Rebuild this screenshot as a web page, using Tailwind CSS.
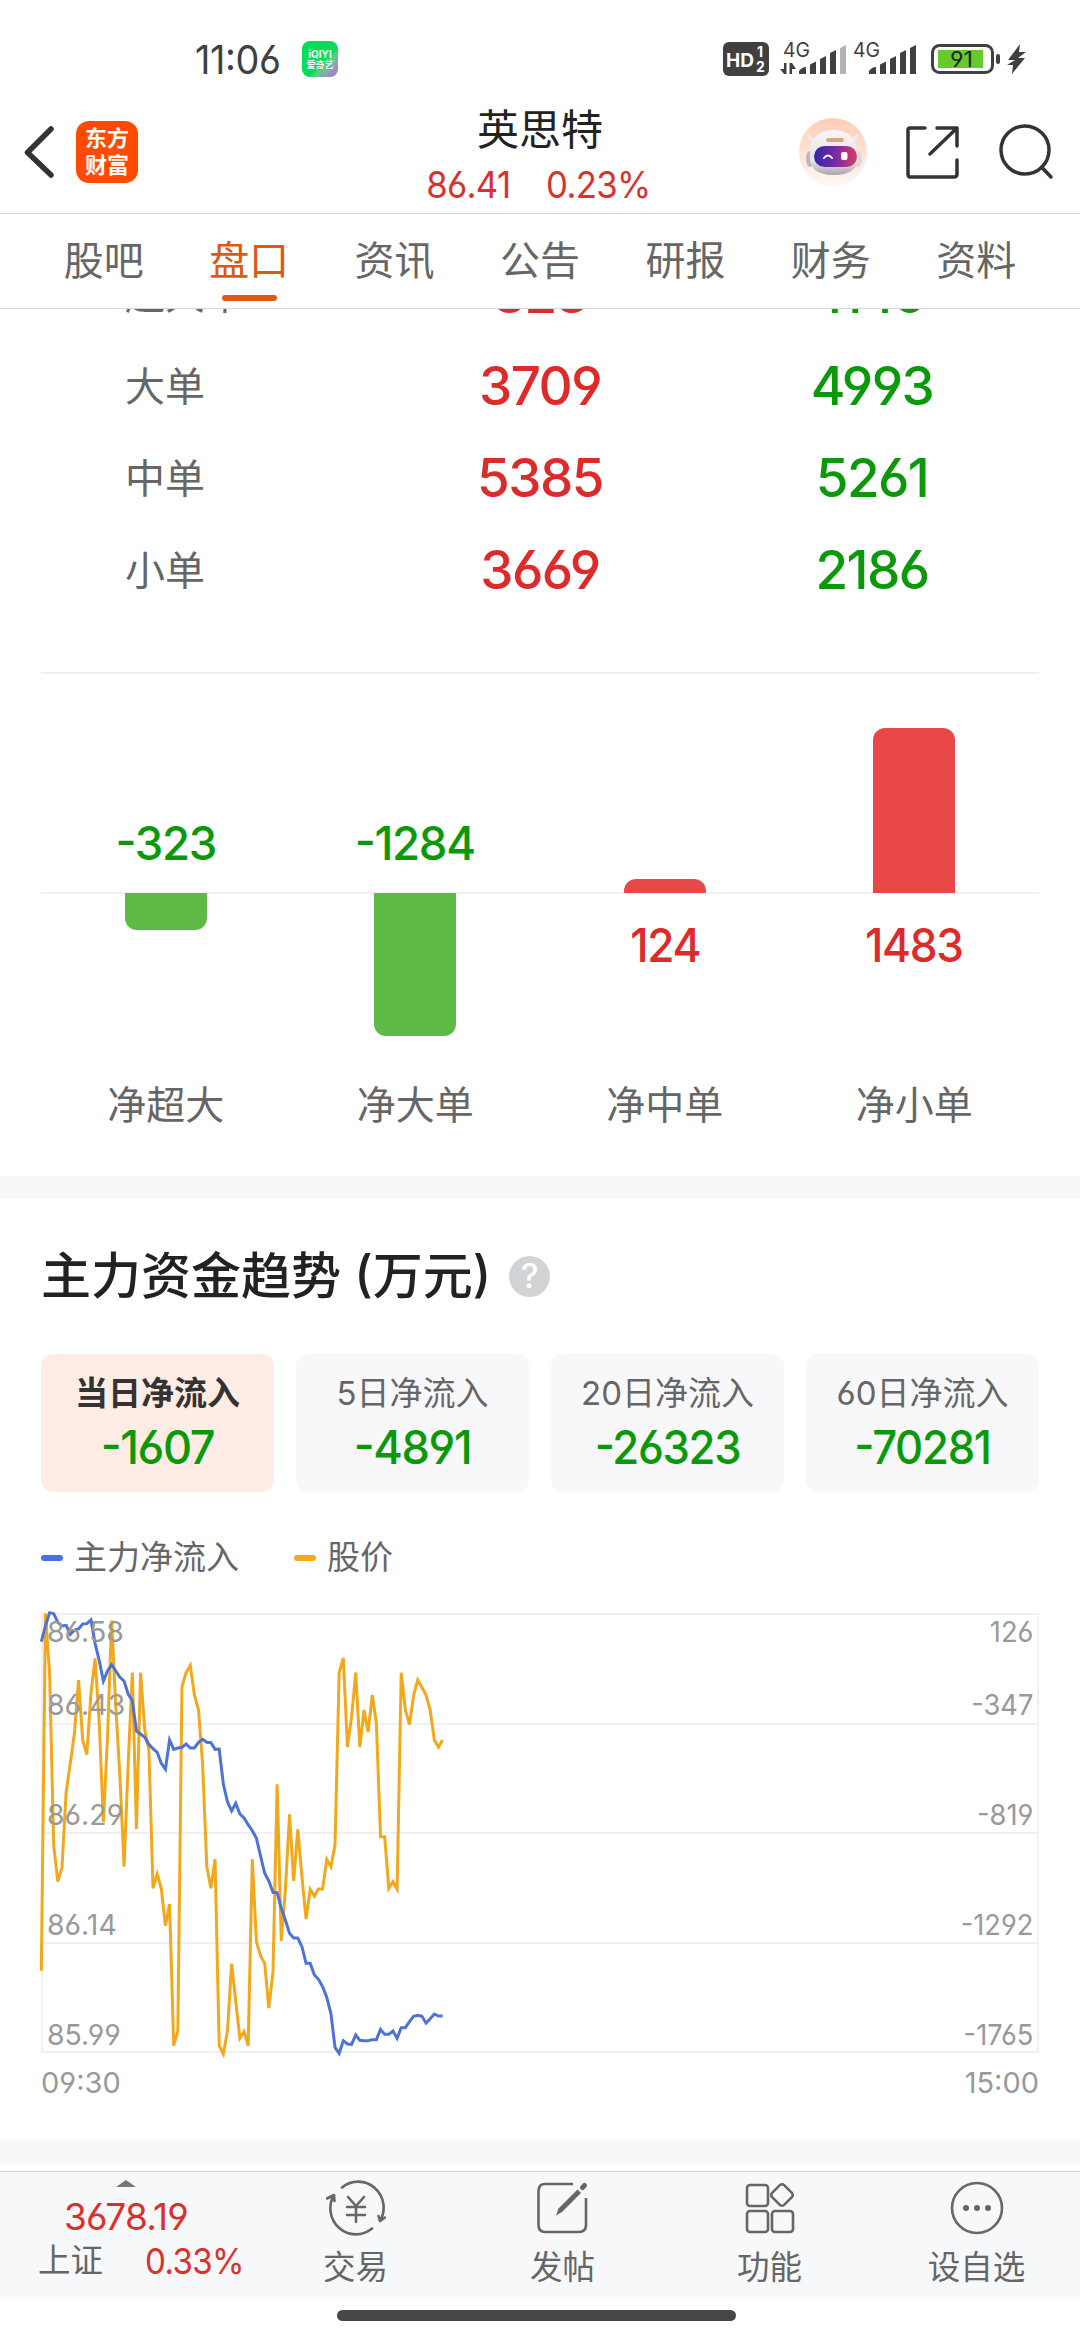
<!DOCTYPE html>
<html lang="zh-CN">

<head>
	<meta charset="UTF-8">
	<meta name="viewport" content="width=device-width, initial-scale=1.0">
	<title>英思特 - 盘口</title>
	<script src="https://cdn.jsdelivr.net/npm/@tailwindcss/browser@4"></script>
</head>

<body class="bg-white font-[Inter,'Noto_Sans_CJK_SC',sans-serif] [font-feature-settings:'cv03','cv04','case']">
	<div class="flex flex-col w-[1080px] h-[2340px] overflow-hidden text-[#666]">

		<!-- status bar -->
		<div class="flex items-center h-[100px] shrink-0 pt-[18px] pl-[195px] text-[#404040]">
			<span class="w-[107px] text-[39px] leading-none tracking-[-0.01em]"><span class="inline-block origin-left scale-x-97">11:06</span></span>
			<div class="flex flex-col items-center justify-center w-9 h-9 rounded-lg bg-linear-to-br from-[#08dc5c] from-60% to-[#b44cf0] text-white font-bold">
				<span class="text-[10px] leading-[10px]">iQIYI</span>
				<span class="text-[9px] leading-[11px]">爱奇艺</span>
			</div>
			<svg class="ml-[384px]" width="306" height="36" viewBox="722 41 306 36">
				<rect x="723" y="42" width="46" height="34" rx="6" fill="#404040" />
				<g fill="#fff" font-family="Inter" font-weight="700">
					<text x="726" y="66.500" font-size="19" textLength="28" lengthAdjust="spacingAndGlyphs">HD</text>
					<text x="757" y="57" font-size="14">1</text>
					<text x="756" y="72" font-size="14">2</text>
				</g>
				<g fill="#404040" font-family="Inter">
					<text x="783" y="57" font-size="20" textLength="27" lengthAdjust="spacingAndGlyphs">4G</text>
					<text x="853" y="57" font-size="20" textLength="27" lengthAdjust="spacingAndGlyphs">4G</text>
				</g>
				<g fill="#404040">
					<path d="M784 63v11h2.500V63zM780 69l4 5V69zM789.500 63v11h2.500V63zM792 63l4 6h-4z" />
					<path d="M799 74v-3q3-4 7-4v7zM810 74V64.500l6-3V74zM820 74V59l6-3V74zM830 74V53l6-3V74z" />
					<path d="M840 74V48l6-3V74z" fill="#b5b5b5" />
					<path d="M869 74v-3q3-4 7-4v7zM880 74V64.500l6-3V74zM890 74V59l6-3V74zM900 74V53l6-3V74zM910 74V48l6-3V74z" />
					<rect x="996" y="54" width="4" height="10" rx="2" />
					<path d="M1020 44l-12 16h7l-8 5h6l-1 9 13-16h-7l8-6h-7z" />
				</g>
				<rect x="932.500" y="45.500" width="60" height="27" rx="7" fill="none" stroke="#404040" stroke-width="3" />
				<rect x="938" y="50" width="45" height="18" fill="#66c92c" />
				<text x="950" y="67" font-size="21" font-family="Inter" fill="#222" textLength="23" lengthAdjust="spacingAndGlyphs">91</text>
			</svg>
		</div>

		<!-- header -->
		<div class="flex items-center justify-between h-[114px] shrink-0 border-b border-[#d6d6d6] pl-[22px] pr-[26px]">
			<div class="flex items-center w-[360px] pb-[9px]">
				<svg width="34" height="56" viewBox="0 0 34 56" fill="none" stroke="#333" stroke-width="5.500" stroke-linecap="round" stroke-linejoin="round">
					<path d="M29 5 5.500 28.500 29 51" />
				</svg>
				<div class="flex flex-col items-center justify-center w-[62px] h-[62px] ml-5 rounded-[13px] bg-[#ff4a00] text-white font-bold text-[22px] leading-[27px]">
					<span>东方</span>
					<span>财富</span>
				</div>
			</div>
			<div class="flex flex-col items-center">
				<h1 class="ml-1 text-[42px] leading-[56px] text-[#222]">英思特</h1>
				<div class="flex gap-[38px] text-[37px] leading-[54px] tracking-[-0.02em] text-[#d8322e] scale-x-94">
					<span>86.41</span>
					<span>0.23%</span>
				</div>
			</div>
			<div class="flex items-center justify-end w-[360px] pb-[9px]">
				<svg width="68" height="68" viewBox="0 0 68 68">
					<defs>
						<linearGradient id="halo" x1="0" y1="0" x2="0" y2="1">
							<stop offset="0" stop-color="#ffcdb5" />
							<stop offset="1" stop-color="#fff7f3" />
						</linearGradient>
						<linearGradient id="visor">
							<stop offset="0" stop-color="#2f2a9e" />
							<stop offset=".5" stop-color="#7a2aa8" />
							<stop offset="1" stop-color="#d8405c" />
						</linearGradient>
						<linearGradient id="helmet" x1="0" y1="0" x2="0" y2="1">
							<stop offset="0" stop-color="#f8f6f7" />
							<stop offset=".7" stop-color="#e6e2e6" />
							<stop offset="1" stop-color="#aaa5ae" />
						</linearGradient>
					</defs>
					<circle cx="34" cy="34" r="34" fill="url(#halo)" />
					<path d="M8 15q0 8 8 12l5-6q-8 0-13-6zM58 15q2 8-5 12l-6-6q8 0 11-6z" fill="#f2eaea" />
					<ellipse cx="11" cy="41" rx="4" ry="8" fill="#bdb8c2" />
					<ellipse cx="59" cy="41" rx="4" ry="8" fill="#ddd6dc" />
					<path d="M11 38Q11 12 34 12T59 38Q60 57 35 57T11 38z" fill="url(#helmet)" />
					<rect x="27" y="20" width="18" height="4" rx="2" fill="#d9a878" />
					<rect x="15" y="28" width="43" height="21" rx="10.500" fill="url(#visor)" />
					<path d="M25 40q4-5 8 0" fill="none" stroke="#fff" stroke-width="2" stroke-linecap="round" />
					<rect x="42" y="34" width="6.500" height="8" rx="2" fill="#fff" />
				</svg>
				<svg class="ml-[37px]" width="56" height="56" viewBox="0 0 56 56" fill="none" stroke="#333" stroke-width="3.500" stroke-linecap="round" stroke-linejoin="round">
					<path d="M21 4H6Q4 4 4 6V50Q4 53 6 53H50Q53 53 53 50V36M53 22V4H33M53 4 26 30" />
				</svg>
				<svg class="ml-[38px]" width="56" height="56" viewBox="0 0 56 56" fill="none" stroke="#333" stroke-width="3.500" stroke-linecap="round">
					<circle cx="27" cy="26" r="24" />
					<path d="M43.500 43 53 53" />
				</svg>
			</div>
		</div>

		<!-- tabs -->
		<div class="grid grid-cols-7 h-[95px] shrink-0 border-b border-[#d6d6d6] px-[31px] text-[40px] leading-[94px] text-center">
			<span>股吧</span>
			<div class="flex flex-col items-center text-[#db5a14]">
				<span class="h-[81px]">盘口</span>
				<span class="w-[55px] h-[6px] rounded-full bg-[#db5a14]"></span>
			</div>
			<span>资讯</span>
			<span>公告</span>
			<span>研报</span>
			<span>财务</span>
			<span>资料</span>
		</div>

		<!-- order sizes, first row is scrolled under the tabs -->
		<div class="h-[363px] shrink-0 overflow-hidden">
			<div class="grid grid-cols-[330px_420px_244px] auto-rows-[92px] -mt-[61px] text-center text-[40px] leading-[92px]">
				<span class="pt-px pl-[125px] text-left">超大单</span>
				<span class="text-[53px] font-medium tracking-[-0.03em] text-[#dd2a2a]">823</span>
				<span class="text-[53px] font-medium tracking-[-0.03em] text-[#0b990b]">1146</span>
				<span class="pt-px pl-[125px] text-left">大单</span>
				<span class="text-[53px] font-medium tracking-[-0.03em] text-[#dd2a2a]">3709</span>
				<span class="text-[53px] font-medium tracking-[-0.03em] text-[#0b990b]">4993</span>
				<span class="pt-px pl-[125px] text-left">中单</span>
				<span class="text-[53px] font-medium tracking-[-0.03em] text-[#dd2a2a]">5385</span>
				<span class="text-[53px] font-medium tracking-[-0.03em] text-[#0b990b]">5261</span>
				<span class="pt-px pl-[125px] text-left">小单</span>
				<span class="text-[53px] font-medium tracking-[-0.03em] text-[#dd2a2a]">3669</span>
				<span class="text-[53px] font-medium tracking-[-0.03em] text-[#0b990b]">2186</span>
			</div>
		</div>

		<!-- net inflow bars -->
		<div class="shrink-0 h-[504px] mx-[41px] border-t-2 border-[#f0f0f0]">
			<div class="grid grid-cols-4 h-[220px] border-b-2 border-[#f0f0f0] text-[47px] leading-[60px] font-medium tracking-[-0.03em] text-[#0b990b]">
				<div class="flex flex-col items-center justify-end pb-[19px]"><span class="scale-x-97">-323</span></div>
				<div class="flex flex-col items-center justify-end pb-[19px]"><span class="scale-x-97">-1284</span></div>
				<div class="flex flex-col items-center justify-end"><span class="w-[82px] h-[14px] -mb-px rounded-t-xl bg-[#e94848]"></span></div>
				<div class="flex flex-col items-center justify-end"><span class="w-[82px] h-[165px] -mb-px rounded-t-xl bg-[#e94848]"></span></div>
			</div>
			<div class="grid grid-cols-4 h-[181px] text-[47px] leading-[60px] font-medium tracking-[-0.03em] text-[#dd2a2a]">
				<div class="flex flex-col items-center"><span class="w-[82px] h-[37px] -mt-px rounded-b-xl bg-[#5cba45]"></span></div>
				<div class="flex flex-col items-center"><span class="w-[82px] h-[143px] -mt-px rounded-b-xl bg-[#5cba45]"></span></div>
				<div class="flex flex-col items-center pt-[21px]"><span class="scale-x-94">124</span></div>
				<div class="flex flex-col items-center pt-[21px]"><span class="scale-x-94">1483</span></div>
			</div>
			<div class="grid grid-cols-4 text-center text-[39px] leading-[60px]">
				<span>净超大</span>
				<span>净大单</span>
				<span>净中单</span>
				<span>净小单</span>
			</div>
		</div>

		<div class="h-[22px] shrink-0 bg-[#f7f8fa]"></div>

		<!-- main capital trend -->
		<div class="flex flex-col shrink-0 h-[943px] px-[41px]">
			<div class="flex items-center h-[156px] text-[#222]">
				<h2 class="text-[50px] leading-none font-medium">主力资金趋势 (万元)</h2>
				<span class="flex items-center justify-center w-[41px] h-[41px] ml-[18px] rounded-full bg-[#d2d3d5] text-white text-[34px] leading-none font-medium">?</span>
			</div>
			<div class="grid grid-cols-4 gap-[22px] h-[138px] text-center text-[33px]">
				<div class="flex flex-col pt-[12px] rounded-xl bg-[#ffede5]">
					<span class="leading-[54px] font-bold text-[#333]">当日净流入</span>
					<span class="text-[47px] leading-[54px] font-medium tracking-[-0.03em] text-[#0b990b] scale-x-96">-1607</span>
				</div>
				<div class="flex flex-col pt-[12px] rounded-xl bg-[#f8f8fa]">
					<span class="leading-[54px]">5日净流入</span>
					<span class="text-[47px] leading-[54px] font-medium tracking-[-0.03em] text-[#0b990b] scale-x-96">-4891</span>
				</div>
				<div class="flex flex-col pt-[12px] rounded-xl bg-[#f8f8fa]">
					<span class="leading-[54px]">20日净流入</span>
					<span class="text-[47px] leading-[54px] font-medium tracking-[-0.03em] text-[#0b990b] scale-x-93">-26323</span>
				</div>
				<div class="flex flex-col pt-[12px] rounded-xl bg-[#f8f8fa]">
					<span class="leading-[54px]">60日净流入</span>
					<span class="text-[47px] leading-[54px] font-medium tracking-[-0.03em] text-[#0b990b] scale-x-93">-70281</span>
				</div>
			</div>
			<div class="flex items-center h-[121px] pt-[11px] text-[33px]">
				<span class="w-[22px] h-[6px] rounded-full bg-[#4a70e0]"></span>
				<span class="ml-[11px] w-[220px]">主力净流入</span>
				<span class="w-[22px] h-[6px] rounded-full bg-[#f5a819]"></span>
				<span class="ml-[11px]">股价</span>
			</div>
			<div class="relative h-[440px]">
				<div class="grid grid-rows-4 h-[440px] border-x-2 border-t-2 border-[#f0f0f0]">
					<div class="border-b-2 border-[#f0f0f0]"></div>
					<div class="border-b-2 border-[#f0f0f0]"></div>
					<div class="border-b-2 border-[#f0f0f0]"></div>
					<div class="border-b-2 border-[#f0f0f0]"></div>
				</div>
				<svg class="absolute top-px left-0 overflow-visible" width="998" height="438" viewBox="0 0 2994 1314" fill="none" stroke-width="9">
					<polyline id="price" stroke="#f2a81c" />
					<polyline id="flow" stroke="#4e73d6" />
				</svg>
				<div class="absolute inset-0 flex justify-between px-[6px] pt-px text-[29px] leading-[36px] text-[#999]">
					<div class="flex flex-col origin-left scale-x-98">
						<span class="h-[73px]">86.58</span>
						<span class="h-[110px]">86.43</span>
						<span class="h-[110px]">86.29</span>
						<span class="h-[110px]">86.14</span>
						<span>85.99</span>
					</div>
					<div class="flex flex-col text-right origin-right scale-x-94">
						<span class="h-[73px]">126</span>
						<span class="h-[110px]">-347</span>
						<span class="h-[110px]">-819</span>
						<span class="h-[110px]">-1292</span>
						<span>-1765</span>
					</div>
				</div>
			</div>
			<div class="flex justify-between pt-[10px] text-[29px] leading-[40px] text-[#999]">
				<span class="origin-left">09:30</span>
				<span class="origin-right">15:00</span>
			</div>
		</div>

		<div class="h-[22px] shrink-0 bg-[#f7f8fa]"></div>

		<!-- bottom navigation -->
		<div class="grid grid-cols-[252px_207px_207px_207px_207px] shrink-0 h-[126px] mt-2 border-t border-[#d0d2d4] bg-[#f7f8fa] text-[32.5px] leading-[44px]">
			<div class="flex flex-col items-center pt-2">
				<svg width="20" height="7" viewBox="0 0 20 7"><path d="M0 7 10 0 20 7z" fill="#777" /></svg>
				<span class="mt-[8px] text-[37px] leading-[44px] tracking-[-0.02em] text-[#d8322e]">3678.19</span>
				<div class="flex w-full pl-[38px]">
					<span class="w-[112px]">上证</span>
					<span class="text-[36px] tracking-[-0.02em] text-[#d8322e] origin-left scale-x-92">0.33%</span>
				</div>
			</div>
			<div class="flex flex-col items-center pt-[7px]">
				<svg width="60" height="58" viewBox="0 0 60 58" fill="none" stroke="#666" stroke-width="2.600" stroke-linecap="round" stroke-linejoin="round">
					<path d="M16 8.500A25.500 26 0 0 1 54 42L59 38.500M54 42 52.500 37" />
					<path d="M46 49.500A25.500 26 0 0 1 8 16L1 19.500M8 16 8.500 22" />
					<path d="M22 18 30 27 38 18M21 28H39M21 36H39M30 27V43" />
				</svg>
				<span class="mt-[9px]">交易</span>
			</div>
			<div class="flex flex-col items-center pt-[7px]">
				<svg width="60" height="58" viewBox="0 0 60 58" fill="none" stroke="#666" stroke-width="2.600">
					<path d="M40 5H12Q5.500 5 5.500 12V46Q5.500 53 12 53H46Q53 53 53 46V19" />
					<path d="M23 36.500 25.500 29.500 44.500 10.500 48 14 29 33z" fill="#666" stroke="none" />
					<path d="M49.500 8.500 51.500 6.500" stroke-width="5" stroke-linecap="round" />
				</svg>
				<span class="mt-[9px]">发帖</span>
			</div>
			<div class="flex flex-col items-center pt-[7px]">
				<svg width="60" height="58" viewBox="0 0 60 58" fill="none" stroke="#666" stroke-width="2.600">
					<rect x="7" y="6" width="21" height="21" rx="3" />
					<rect x="7" y="32" width="21" height="21" rx="3" />
					<rect x="32" y="32" width="21" height="21" rx="3" />
					<rect x="33.500" y="7.500" width="17" height="17" rx="3" transform="rotate(45 42 16)" />
				</svg>
				<span class="mt-[9px]">功能</span>
			</div>
			<div class="flex flex-col items-center pt-[7px]">
				<svg width="60" height="58" viewBox="0 0 60 58" fill="#666">
					<circle cx="30" cy="29" r="25" fill="none" stroke="#666" stroke-width="2.600" />
					<circle cx="19" cy="29" r="3" />
					<circle cx="30" cy="29" r="3" />
					<circle cx="41" cy="29" r="3" />
				</svg>
				<span class="mt-[9px]">设自选</span>
			</div>
		</div>
		<div class="w-[399px] h-[11px] mt-[13px] ml-[337px] rounded-full bg-[#474747]"></div>
	</div>

	<script>
		// one value per minute from 09:30, measured from the top of the panel
		var price = [
			1070, -2, 178, 696, 803, 760, 533, 448, 358, 198, 378, 422, 238, 133, 328, 624, 368, 20, 278, 488,
			758, 448, 176, 645, 176, 348, 408, 823, 780, 823, 935, 870, 1295, 1250, 218, 176, 154, 243, 288, 453,
			758, 823, 736, 1295, 1320, 1250, 1049, 1163, 1273, 1253, 1295, 736, 983, 1026, 1048, 1182, 1073, 511, 981, 828,
			601, 801, 646, 788, 915, 826, 846, 825, 825, 736, 758, 693, 176, 132, 399, 308, 176, 399, 288, 354,
			243, 328, 668, 668, 823, 803, 825, 176, 288, 332, 243, 198, 220, 243, 288, 378, 399, 378
		];
		var flow = [
			83, 36, -4, -1, 25, 36, 34, 61, 48, 45, 30, 29, 18, 88, 140, 201, 171, 152, 171, 190,
			201, 240, 260, 351, 360, 370, 391, 404, 415, 448, 466, 378, 406, 402, 400, 390, 402, 402, 385, 376,
			385, 386, 406, 405, 510, 564, 591, 568, 600, 612, 632, 650, 673, 726, 778, 801, 835, 836, 883, 918,
			958, 972, 972, 998, 1048, 1048, 1083, 1096, 1118, 1150, 1198, 1300, 1318, 1280, 1290, 1291, 1263, 1279, 1280, 1280,
			1277, 1277, 1246, 1261, 1261, 1251, 1273, 1241, 1241, 1223, 1207, 1204, 1207, 1227, 1214, 1200, 1206, 1206
		];

		function drawLine(id, values) {
			var points = values.map(function (value, i) {
				return (1 + i * 12.41).toFixed(1) + ',' + value;
			});
			document.getElementById(id).setAttribute('points', points.join(' '));
		}

		drawLine('price', price);
		drawLine('flow', flow);
	</script>
</body>

</html>
